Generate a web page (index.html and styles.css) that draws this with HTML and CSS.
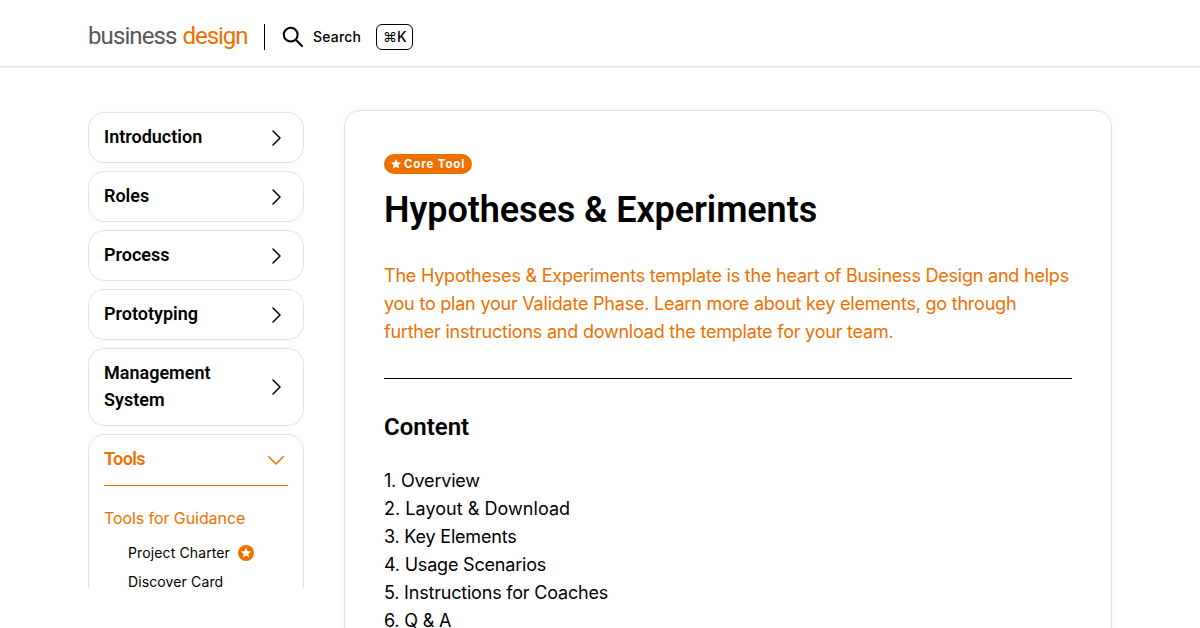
FILE: index.html
```html
<!DOCTYPE html>
<html lang="en">
<head>
    <meta charset="UTF-8">
    <meta name="viewport" content="width=device-width, initial-scale=1.0">
    <title>Hypotheses &amp; Experiments</title>
    <link rel="stylesheet" href="styles.css">
</head>
<body>
    <header class="header">
        <a class="logo" href="#"><span class="logo-business">business</span><span class="logo-design">design</span></a>
        <button class="search">
            <svg class="search-icon" width="22" height="22" viewBox="0 0 22 22"><circle cx="8.7" cy="8.7" r="6.9"/><path d="M13.8 13.8L20 20"/></svg>
            <span class="search-label">Search</span>
            <kbd><span class="cmd">⌘</span>K</kbd>
        </button>
    </header>
    <div class="container">
        <nav class="sidebar">
            <a class="card" href="#"><span>Introduction</span><svg class="chevron" viewBox="0 0 20 20"><path d="M7 3L14 10L7 17"/></svg></a>
            <a class="card" href="#"><span>Roles</span><svg class="chevron" viewBox="0 0 20 20"><path d="M7 3L14 10L7 17"/></svg></a>
            <a class="card" href="#"><span>Process</span><svg class="chevron" viewBox="0 0 20 20"><path d="M7 3L14 10L7 17"/></svg></a>
            <a class="card" href="#"><span>Prototyping</span><svg class="chevron" viewBox="0 0 20 20"><path d="M7 3L14 10L7 17"/></svg></a>
            <a class="card" href="#"><span>Management<br>System</span><svg class="chevron" viewBox="0 0 20 20"><path d="M7 3L14 10L7 17"/></svg></a>
            <div class="card card-open">
                <div class="card-head"><span>Tools</span><svg class="chevron" viewBox="0 0 20 20"><path d="M2.8 6.8L10 14L17.2 6.8"/></svg></div>
                <div class="group-title">Tools for Guidance</div>
                <ul class="group">
                    <li>Project Charter
                        <svg class="core-icon" width="16" height="16" viewBox="0 0 16 16"><circle cx="8" cy="8" r="8"/><path d="M8 2.8L9.5 6.2L13.1 6.5L10.4 8.9L11.2 12.5L8 10.6L4.8 12.5L5.6 8.9L2.9 6.5L6.5 6.2Z"/></svg>
                    </li>
                    <li>Discover Card</li>
                </ul>
            </div>
        </nav>
        <main class="content">
            <div class="badge"><svg width="10" height="10" viewBox="0 0 10 10"><path d="M5 0L6.5 3.3L10 3.7L7.4 6.1L8.1 9.6L5 7.8L1.9 9.6L2.6 6.1L0 3.7L3.5 3.3Z"/></svg>Core Tool</div>
            <h1>Hypotheses &amp; Experiments</h1>
            <p class="intro">The Hypotheses &amp; Experiments template is the heart of Business Design and helps you to plan your Validate Phase. Learn more about key elements, go through further instructions and download the template for your team.</p>
            <h2>Content</h2>
            <div class="toc">
                <div>1. Overview</div>
                <div>2. Layout &amp; Download</div>
                <div>3. Key Elements</div>
                <div>4. Usage Scenarios</div>
                <div>5. Instructions for Coaches</div>
                <div>6. Q &amp; A</div>
            </div>
        </main>
    </div>
</body>
</html>
```

FILE: styles.css
```css
* {
    box-sizing: border-box;
}
body {
    margin: 0;
    height: 628px;
    overflow: hidden;
    font-family: Inter, sans-serif;
    color: #000;
    background: #fff;
}
a {
    color: inherit;
    text-decoration: none;
}
.header {
    height: 66px;
    padding: 8px 88px 0;
    display: flex;
    align-items: center;
    box-shadow: 0 1px 2px rgba(0, 0, 0, 0.16);
}
.logo {
    width: 177px;
    height: 26px;
    display: flex;
    gap: 6px;
    border-right: 1px solid #000;
    font-family: Roboto, sans-serif;
    font-size: 24px;
    line-height: 25px;
}
.logo-business {
    color: #575756;
    letter-spacing: -0.9px;
}
.logo-design {
    color: #ee7100;
    letter-spacing: -1.05px;
}
.search {
    display: flex;
    align-items: center;
    margin-left: 17px;
    padding: 0;
    border: none;
    background: none;
    color: #000;
    font-family: inherit;
    font-size: 14px;
    font-weight: 500;
}
.search-icon {
    fill: none;
    stroke: #000;
    stroke-width: 2;
    stroke-linecap: round;
}
.search-label {
    margin: -2px 0 0 9px;
    letter-spacing: 0.2px;
}
kbd {
    width: 37px;
    height: 26px;
    margin-left: 15px;
    border: 1px solid #000;
    border-radius: 6px;
    font-family: inherit;
    line-height: 24px;
}
.cmd {
    font-weight: 400;
}
.container {
    height: 562px;
    display: flex;
    align-items: flex-start;
    gap: 40px;
    padding: 44px 88px 0;
    overflow: hidden;
}
.sidebar {
    width: 216px;
    height: 478px;
    padding-top: 2px;
    display: flex;
    flex-direction: column;
    gap: 8px;
    flex-shrink: 0;
    overflow: hidden;
}
.card {
    display: flex;
    align-items: center;
    justify-content: space-between;
    flex-shrink: 0;
    padding: 10px 17px 12px 15px;
    border: 1px solid #e2e2e2;
    border-radius: 16px;
    font-family: Roboto, sans-serif;
    font-size: 18px;
    font-weight: 600;
    line-height: 27px;
    box-shadow: 0 0 8px rgba(0, 0, 0, 0.02);
}
.chevron {
    width: 20px;
    height: 20px;
    margin-top: 2px;
    fill: none;
    stroke: #000;
    stroke-width: 1.5;
    stroke-linecap: round;
    stroke-linejoin: round;
}
.card-open {
    display: block;
    padding: 10px 15px;
}
.card-head {
    height: 41px;
    padding-right: 2px;
    display: flex;
    justify-content: space-between;
    border-bottom: 1px solid #ee7100;
    color: #ee7100;
    letter-spacing: -0.6px;
}
.card-head .chevron {
    margin-top: 5px;
    stroke: #ee7100;
}
.group-title {
    margin-top: 20px;
    color: #ee7100;
    font-family: Inter, sans-serif;
    font-size: 16px;
    font-weight: 400;
    line-height: 24px;
    letter-spacing: -0.08px;
}
.group {
    margin: 8px 0 0;
    padding: 0 0 0 24px;
    list-style: none;
    font-family: Inter, sans-serif;
    font-size: 14px;
    font-weight: 400;
    line-height: 29px;
    letter-spacing: 0.12px;
}
.group li {
    display: flex;
    align-items: center;
    gap: 8px;
    white-space: nowrap;
}
.core-icon circle {
    fill: #ee7100;
}
.core-icon path {
    fill: #fff;
}
.content {
    width: 768px;
    height: 700px;
    padding: 43px 39px;
    border: 1px solid #e2e2e2;
    border-radius: 16px;
    box-shadow: 0 0 12px rgba(0, 0, 0, 0.03);
}
.badge {
    width: 88px;
    height: 20px;
    padding-left: 7px;
    display: flex;
    align-items: center;
    gap: 3px;
    border-radius: 10px;
    background: #ee7100;
    color: #fff;
    font-size: 11.5px;
    font-weight: 700;
    line-height: 18px;
    letter-spacing: 0.85px;
}
.badge svg {
    flex-shrink: 0;
    fill: #fff;
}
h1 {
    margin: 12px 0 28px;
    font-family: Roboto, sans-serif;
    font-size: 36px;
    font-weight: 600;
    line-height: 48px;
    letter-spacing: -0.08px;
}
.intro {
    margin: 0;
    padding-bottom: 32px;
    border-bottom: 1px solid #000;
    color: #ee7100;
    font-size: 18px;
    line-height: 28px;
    letter-spacing: -0.22px;
}
h2 {
    margin: 32px 0 24px;
    font-family: Roboto, sans-serif;
    font-size: 24px;
    font-weight: 600;
    line-height: 32px;
}
.toc {
    font-size: 18px;
    line-height: 28px;
    letter-spacing: -0.2px;
}
.toc div:nth-child(2) {
    letter-spacing: 0.04px;
}
```
